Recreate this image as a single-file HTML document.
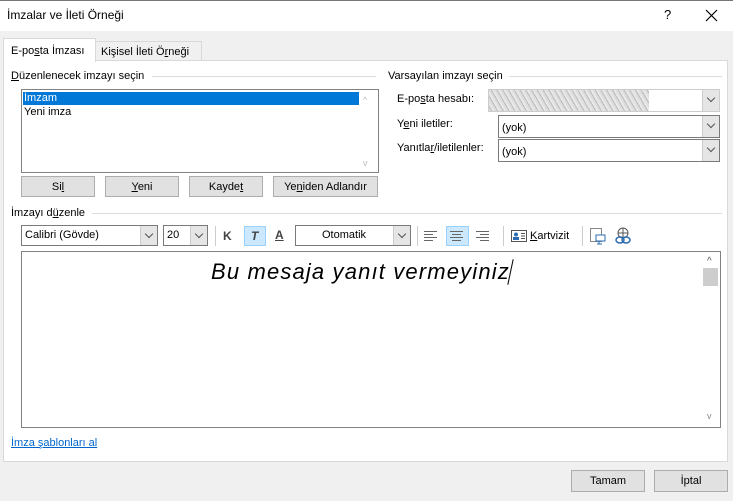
<!DOCTYPE html>
<html><head><meta charset="utf-8"><style>
*{box-sizing:border-box;margin:0;padding:0}
body{width:733px;height:501px;background:#f0f0f0;font-family:"Liberation Sans",sans-serif;font-size:11px;color:#000;position:relative;overflow:hidden}
.a{position:absolute}
.t{position:absolute;white-space:nowrap;line-height:13px}
.btn{position:absolute;background:#e1e1e1;border:1px solid #adadad;text-align:center;line-height:20px;font-size:11px}
.cb{position:absolute;background:#fff;border:1px solid #7a7a7a;height:23px}
.dd{position:absolute;right:0;top:0;bottom:0;width:17px;background:#e5e5e5;border-left:1px solid #ccc}
.dd:after{content:"";position:absolute;left:5px;top:5px;width:5px;height:5px;border-right:1px solid #555;border-bottom:1px solid #555;transform:rotate(45deg)}
.ln{position:absolute;height:1px;background:#dcdcdc}
.sep{position:absolute;width:1px;height:20px;background:#ccc;top:226px}
u{text-decoration:underline}
</style></head><body>
<div class="a" style="left:0;top:0;width:733px;height:31px;background:#fff;border-top:1px solid #777"></div>
<div class="t" style="left:7px;top:9px;font-size:12px">İmzalar ve İleti Örneği</div>
<div class="t" style="left:664px;top:8px;font-size:13px">?</div>
<svg class="a" style="left:705px;top:9px" width="13" height="13"><path d="M1 1L12 12M12 1L1 12" stroke="#000" stroke-width="1.2"/></svg>

<div class="a" style="left:3px;top:60px;width:725px;height:402px;background:#fff;border:1px solid #d9d9d9"></div>
<div class="a" style="left:95px;top:41px;width:107px;height:20px;background:#f0f0f0;border:1px solid #d9d9d9"></div>
<div class="a" style="left:3px;top:38px;width:93px;height:24px;background:#fff;border:1px solid #d9d9d9;border-bottom:none"></div>
<div class="t" style="left:11px;top:45px">E-po<u>s</u>ta İmzası</div>
<div class="t" style="left:101px;top:46px">Kişisel İleti Ö<u>r</u>neği</div>

<div class="t" style="left:11px;top:70px"><u>D</u>üzenlenecek imzayı seçin</div>
<div class="ln" style="left:152px;top:76px;width:224px"></div>
<div class="a" style="left:21px;top:89px;width:358px;height:84px;border:1px solid #828282;background:#fff"></div>
<div class="a" style="left:23px;top:92px;width:336px;height:13px;background:#0078d7"></div>
<div class="t" style="left:24px;top:92px;color:#fff">İmzam</div>
<div class="t" style="left:24px;top:106px">Yeni imza</div>
<div class="t" style="left:363px;top:94px;color:#bbb;font-size:9px">^</div>
<div class="t" style="left:363px;top:157px;color:#bbb;font-size:9px">v</div>
<div class="btn" style="left:21px;top:176px;width:74px;height:21px">Si<u>l</u></div>
<div class="btn" style="left:105px;top:176px;width:74px;height:21px"><u>Y</u>eni</div>
<div class="btn" style="left:189px;top:176px;width:74px;height:21px">Kayde<u>t</u></div>
<div class="btn" style="left:273px;top:176px;width:105px;height:21px">Ye<u>n</u>iden Adlandır</div>

<div class="t" style="left:388px;top:70px">Varsayılan imzayı seçin</div>
<div class="ln" style="left:509px;top:76px;width:213px"></div>
<div class="t" style="left:397px;top:93px">E-po<u>s</u>ta hesabı:</div>
<div class="t" style="left:397px;top:118px">Y<u>e</u>ni iletiler:</div>
<div class="t" style="left:397px;top:142px">Yanıtla<u>r</u>/iletilenler:</div>
<div class="cb" style="left:488px;top:89px;width:232px;border-color:#ccc"><div class="a" style="left:0;top:0;width:160px;height:21px;background:repeating-linear-gradient(60deg,#ddd 0 2px,#bbb 2px 3px,#e8e8e8 3px 5px)"></div><div class="dd"></div></div>
<div class="cb" style="left:498px;top:115px;width:222px"><div class="t" style="left:3px;top:6px">(yok)</div><div class="dd"></div></div>
<div class="cb" style="left:498px;top:139px;width:222px"><div class="t" style="left:3px;top:6px">(yok)</div><div class="dd"></div></div>

<div class="t" style="left:11px;top:207px">İmzayı d<u>ü</u>zenle</div>
<div class="ln" style="left:92px;top:213px;width:630px"></div>
<div class="cb" style="left:21px;top:225px;width:137px;height:21px"><div class="t" style="left:3px;top:3px">Calibri (Gövde)</div><div class="dd"></div></div>
<div class="cb" style="left:163px;top:225px;width:45px;height:21px"><div class="t" style="left:3px;top:3px">20</div><div class="dd"></div></div>
<div class="sep" style="left:215px"></div>
<div class="t" style="left:223px;top:230px;font-weight:bold;font-size:12px;color:#444">K</div>
<div class="a" style="left:244px;top:226px;width:22px;height:20px;background:#cce8ff;border:1px solid #99d1ff"></div>
<div class="t" style="left:251px;top:230px;font-style:italic;font-weight:bold;font-size:12px;color:#444">T</div>
<div class="t" style="left:275px;top:229px;font-weight:bold;font-size:12px;color:#444;text-decoration:underline">A</div>
<div class="cb" style="left:295px;top:225px;width:116px;height:21px"><div class="t" style="left:26px;top:3px">Otomatik</div><div class="dd"></div></div>
<div class="sep" style="left:417px"></div>
<div class="a" style="left:446px;top:226px;width:23px;height:20px;background:#cce8ff;border:1px solid #99d1ff"></div>
<svg class="a" style="left:424px;top:230px" width="70" height="12" stroke="#666" stroke-width="1"><path d="M0 1.5H13M0 4.5H9M0 7.5H13M0 10.5H9"/><path d="M26 1.5H39M28 4.5H37M26 7.5H39M28 10.5H37"/><path d="M52 1.5H65M56 4.5H65M52 7.5H65M56 10.5H65"/></svg>
<div class="sep" style="left:503px"></div>
<svg class="a" style="left:511px;top:230px" width="16" height="12"><rect x="0.5" y="0.5" width="15" height="11" fill="#fff" stroke="#555"/><circle cx="5" cy="4.5" r="2" fill="#2b6cb0"/><rect x="2" y="7" width="6" height="3" fill="#2b6cb0"/><path d="M10 3.5H14M10 6H14M10 8.5H14" stroke="#555"/></svg>
<div class="t" style="left:530px;top:230px"><u>K</u>artvizit</div>
<div class="sep" style="left:582px"></div>
<svg class="a" style="left:590px;top:228px" width="16" height="18"><rect x="0.5" y="0.5" width="11" height="13" fill="#fff" stroke="#888"/><rect x="6" y="7" width="9" height="6" fill="#fff" stroke="#2b6cb0"/><path d="M9 13V16M7 16H12" stroke="#2b6cb0"/></svg>
<svg class="a" style="left:614px;top:227px" width="18" height="18" fill="none"><circle cx="9" cy="6" r="5" stroke="#555"/><path d="M4 6H14M9 1V11" stroke="#555"/><ellipse cx="6" cy="13" rx="4" ry="3" stroke="#2b6cb0" stroke-width="1.5"/><ellipse cx="12" cy="13" rx="4" ry="3" stroke="#2b6cb0" stroke-width="1.5"/></svg>

<div class="a" style="left:21px;top:251px;width:700px;height:177px;background:#fff;border:1px solid #828282"></div>
<div class="a" style="left:703px;top:268px;width:15px;height:18px;background:#cdcdcd"></div>
<div class="t" style="left:707px;top:255px;color:#555;font-size:10px">^</div>
<div class="t" style="left:707px;top:410px;color:#888;font-size:9px">v</div>
<div class="t" style="left:211px;top:259px;font-style:italic;font-size:22px;line-height:26px;letter-spacing:1.15px">Bu mesaja yanıt vermeyiniz</div>
<div class="a" style="left:510px;top:259px;width:1px;height:26px;background:#000;transform:rotate(12deg)"></div>

<div class="t" style="left:11px;top:437px;color:#0066cc;text-decoration:underline">İmza şablonları al</div>
<div class="btn" style="left:571px;top:470px;width:74px;height:22px">Tamam</div>
<div class="btn" style="left:654px;top:470px;width:74px;height:22px">İptal</div>
</body></html>
